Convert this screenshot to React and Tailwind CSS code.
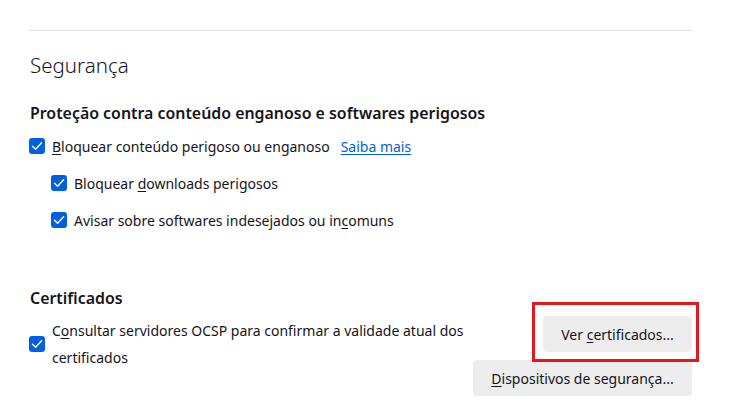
import React from "react";

function Check({ className = "" }) {
  return (
    <span className={"flex h-4 w-4 shrink-0 items-center justify-center rounded-[3px] bg-[#0061e0] " + className}>
      <svg width="12" height="12" viewBox="0 0 12 12" fill="none">
        <polyline points="1.5,6.2 4.6,9.2 10.6,2.8" stroke="white" strokeWidth="1.4" strokeLinecap="round" strokeLinejoin="round" />
      </svg>
    </span>
  );
}

export default function App() {
  return (
    <div className="w-[736px] h-[408px] overflow-hidden bg-white text-[#15141a] font-['Noto_Sans',sans-serif]">
      <div className="ml-[29px] w-[663px] pt-[30px]">
        <div className="h-px bg-[#e0e0e6]" />
        <div className="mt-[19px] h-[30px] text-[20.5px] font-light leading-[30px] pl-px">Segurança</div>
        <div className="mt-[21px] h-[24px] text-[15.9px] font-semibold leading-[24px] pl-px">
          Proteção contra conteúdo enganoso e softwares perigosos
        </div>
        <div className="mt-[9px] flex h-[24px] items-center gap-[7px] text-[14px]">
          <Check />
          <span>
            <span className="underline underline-offset-2">B</span>loquear conteúdo perigoso ou enganoso
          </span>
          <span className="ml-[4px] text-[#0061e0] underline underline-offset-2">Saiba mais</span>
        </div>
        <div className="mt-[13px] ml-[22px] flex h-[24px] items-center gap-[7px] text-[14px]">
          <Check />
          <span>
            Bloquear <span className="underline underline-offset-2">d</span>ownloads perigosos
          </span>
        </div>
        <div className="mt-[13px] ml-[22px] flex h-[24px] items-center gap-[7px] text-[14px]">
          <Check />
          <span>
            Avisar sobre softwares indesejados ou in<span className="underline underline-offset-2">c</span>omuns
          </span>
        </div>
        <div className="mt-[54px] h-[24px] text-[15.9px] font-semibold leading-[24px] pl-px">Certificados</div>
        <div className="mt-[6px] flex items-start justify-between">
          <div className="mt-px flex items-center gap-[7px] text-[14px]">
            <Check />
            <span className="w-[421px] leading-[27px]">
              C<span className="underline underline-offset-2">o</span>nsultar servidores OCSP para confirmar a validade atual dos certificados
            </span>
          </div>
          <div className="flex flex-col items-end gap-[8px] text-[14px]">
            <div className="relative">
              <button className="h-[36px] w-[149px] rounded-[4px] bg-[#ededee] text-[#15141a]">
                Ver <span className="underline underline-offset-2">c</span>ertificados...
              </button>
              <div className="pointer-events-none absolute -left-[11px] -right-[7px] -top-[14px] -bottom-[10px] border-[3px] border-[#e8141e]" />
            </div>
            <button className="h-[36px] w-[219px] rounded-[4px] bg-[#ededee] text-[#15141a]">
              <span className="underline underline-offset-2">D</span>ispositivos de segurança...
            </button>
          </div>
        </div>
      </div>
    </div>
  );
}
